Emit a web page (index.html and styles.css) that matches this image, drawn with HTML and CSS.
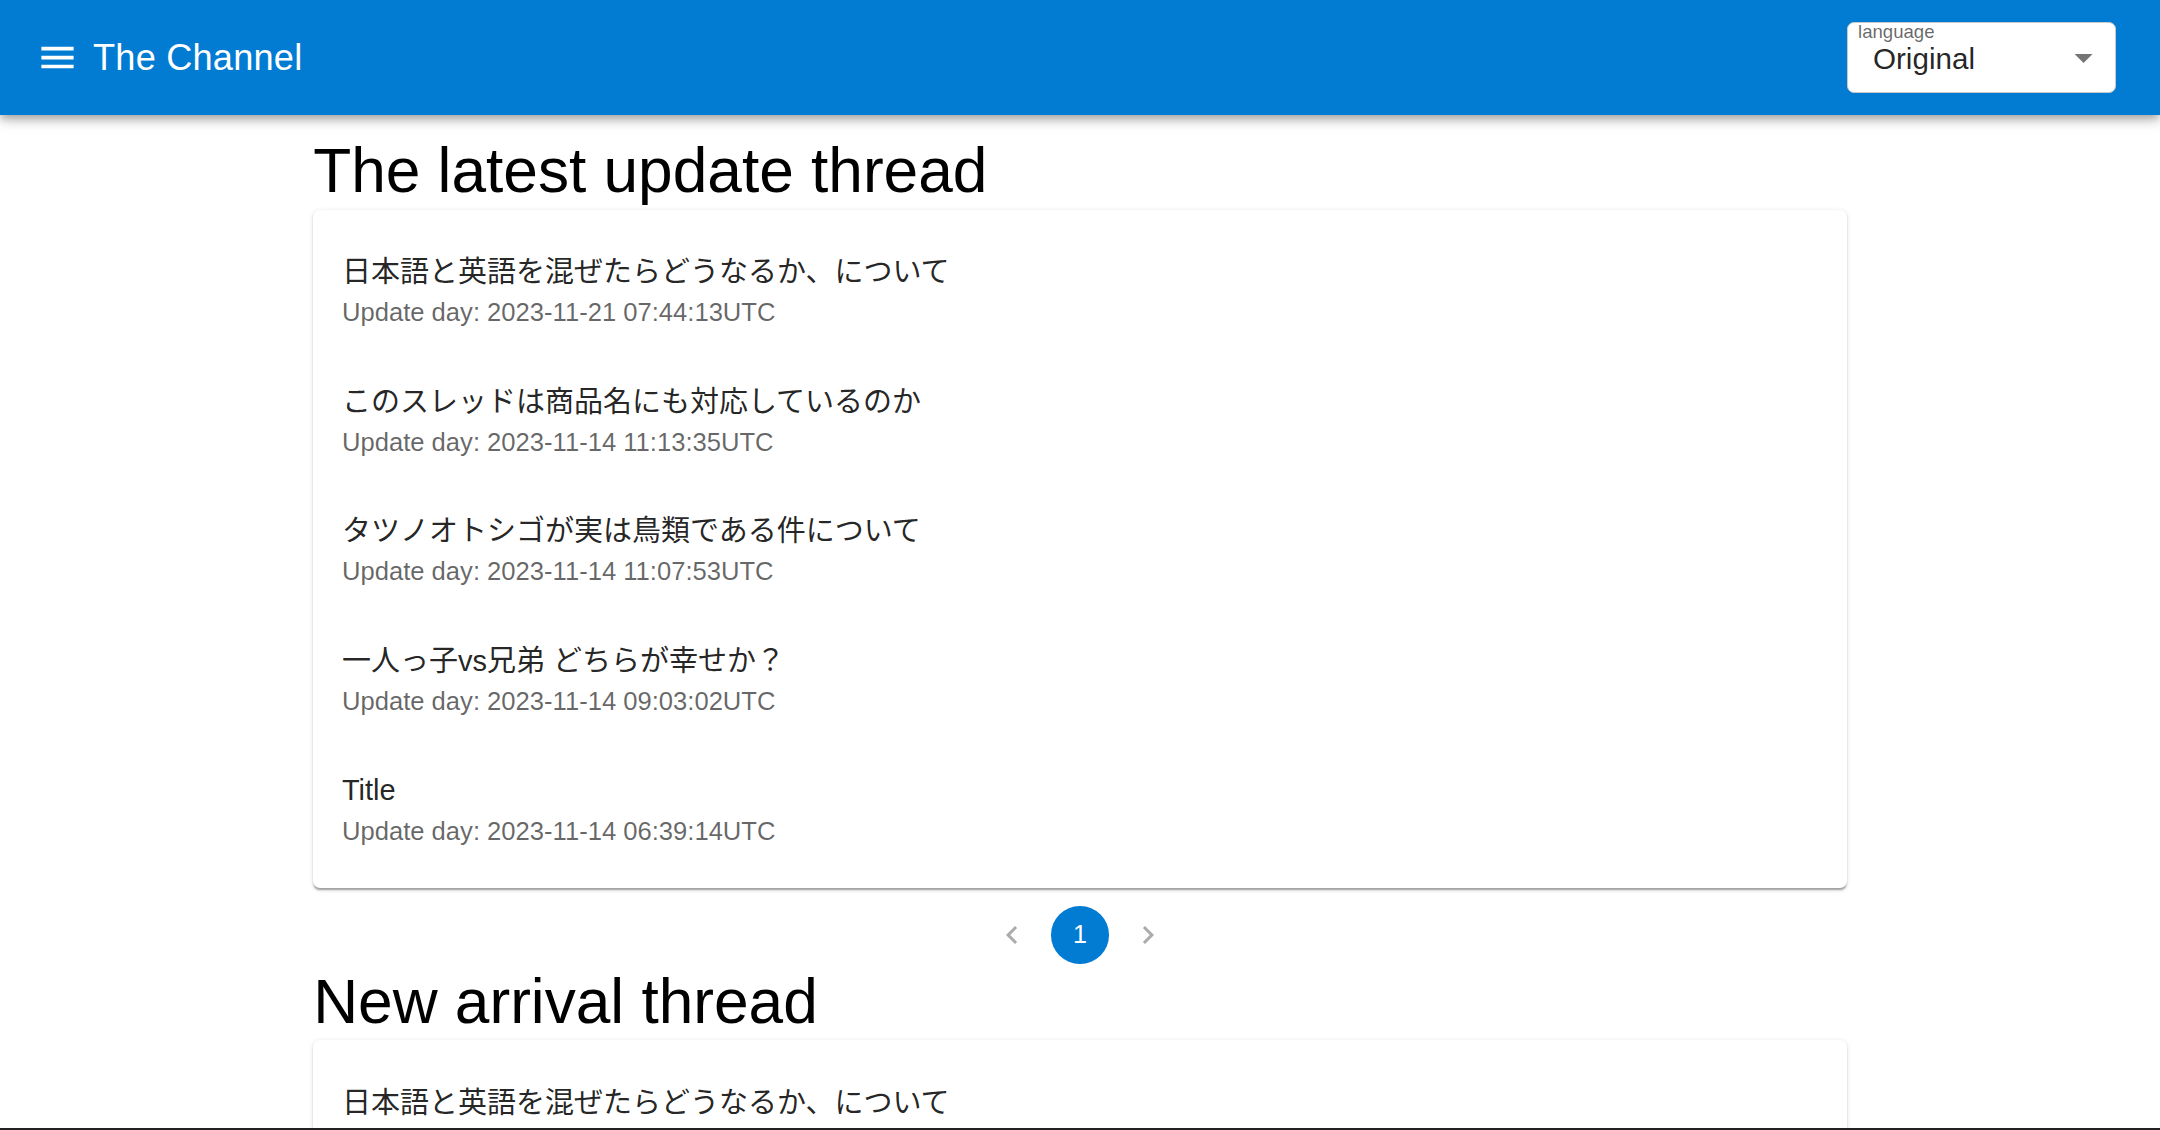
FILE: index.html
```html
<!DOCTYPE html>
<html lang="ja">
<head>
<meta charset="utf-8">
<title>The Channel</title>
<link rel="stylesheet" href="styles.css">
</head>
<body>
<div class="page">
  <header class="app-bar">
    <button class="menu-btn" aria-label="menu">
      <svg viewBox="0 0 24 24" class="menu-icon"><path d="M3 18h18v-2H3v2zm0-5h18v-2H3v2zm0-7v2h18V6H3z"/></svg>
    </button>
    <div class="app-title">The Channel</div>
    <div class="lang-select">
      <span class="lang-label">language</span>
      <span class="lang-value">Original</span>
      <svg viewBox="0 0 24 24" class="drop-icon"><path d="M7 10l5 5 5-5z"/></svg>
    </div>
  </header>

  <main class="container">
    <h2 class="section-title">The latest update thread</h2>
    <div class="card">
      <ul class="list">
        <li class="item">
          <div class="primary">日本語と英語を混ぜたらどうなるか、について</div>
          <div class="secondary">Update day: 2023-11-21 07:44:13UTC</div>
        </li>
        <li class="item">
          <div class="primary">このスレッドは商品名にも対応しているのか</div>
          <div class="secondary">Update day: 2023-11-14 11:13:35UTC</div>
        </li>
        <li class="item">
          <div class="primary">タツノオトシゴが実は鳥類である件について</div>
          <div class="secondary">Update day: 2023-11-14 11:07:53UTC</div>
        </li>
        <li class="item">
          <div class="primary">一人っ子vs兄弟 どちらが幸せか？</div>
          <div class="secondary">Update day: 2023-11-14 09:03:02UTC</div>
        </li>
        <li class="item">
          <div class="primary">Title</div>
          <div class="secondary">Update day: 2023-11-14 06:39:14UTC</div>
        </li>
      </ul>
    </div>

    <nav class="pagination">
      <span class="page-item arrow">
        <svg viewBox="0 0 24 24"><path d="M15.41 7.41 14 6l-6 6 6 6 1.41-1.41L10.83 12z"/></svg>
      </span>
      <span class="page-item current">1</span>
      <span class="page-item arrow">
        <svg viewBox="0 0 24 24"><path d="M10 6 8.59 7.41 13.17 12l-4.58 4.59L10 18l6-6z"/></svg>
      </span>
    </nav>

    <h2 class="section-title">New arrival thread</h2>
    <div class="card">
      <ul class="list">
        <li class="item">
          <div class="primary">日本語と英語を混ぜたらどうなるか、について</div>
          <div class="secondary">Update day: 2023-11-21 07:44:13UTC</div>
        </li>
      </ul>
    </div>
  </main>
  <div class="window-edge"></div>
</div>
</body>
</html>
```

FILE: styles.css
```css
html, body {
  margin: 0;
  padding: 0;
  background: #ffffff;
}

body {
  font-family: "Liberation Sans", Arial, "Noto Sans CJK JP", sans-serif;
  color: rgba(0, 0, 0, 0.87);
}

.page {
  position: relative;
  height: 100vh;
  overflow: hidden;
}

/* ---------- App bar ---------- */
.app-bar {
  position: relative;
  z-index: 2;
  height: 115px;
  box-sizing: border-box;
  display: flex;
  align-items: center;
  padding: 0 44px 0 36px;
  background: #027bd3;
  color: #ffffff;
  box-shadow: 0 3.6px 7.2px -1.8px rgba(0, 0, 0, 0.2),
              0 7.2px 9px 0 rgba(0, 0, 0, 0.14),
              0 1.8px 18px 0 rgba(0, 0, 0, 0.12);
}

.menu-btn {
  display: flex;
  align-items: center;
  justify-content: center;
  width: 43px;
  height: 43px;
  padding: 0;
  margin: 0;
  border: 0;
  background: transparent;
}

.menu-icon {
  width: 43.2px;
  height: 43.2px;
  fill: #ffffff;
}

.app-title {
  flex: 1;
  margin-left: 14px;
  font-size: 36.2px;
  line-height: 1.6;
  font-weight: 400;
  letter-spacing: 0.2px;
}

.lang-select {
  position: relative;
  width: 269px;
  height: 71px;
  box-sizing: border-box;
  display: flex;
  align-items: center;
  padding: 0 10px 0 25px;
  background: #ffffff;
  border: 1.5px solid #c9c9c9;
  border-radius: 7px;
  color: rgba(0, 0, 0, 0.87);
}

.lang-label {
  position: absolute;
  left: 10px;
  top: -2px;
  font-size: 18.6px;
  line-height: 22px;
  color: rgba(0, 0, 0, 0.6);
}

.lang-value {
  flex: 1;
  font-size: 29.6px;
  line-height: 41px;
  margin-top: 1px;
}

.drop-icon {
  width: 43.2px;
  height: 43.2px;
  fill: #757575;
}

/* ---------- Main ---------- */
.container {
  max-width: 1620px;
  box-sizing: border-box;
  margin: 0 auto;
  padding: 18px 43.2px 0;
}

.section-title {
  margin: 0 0 1px;
  font-size: 62.2px;
  line-height: 75.6px;
  height: 75.6px;
  font-weight: 400;
  color: #000000;
  white-space: nowrap;
}

.card {
  background: #ffffff;
  border-radius: 7.2px;
  box-shadow: 0 3.6px 1.8px -1.8px rgba(0, 0, 0, 0.2),
              0 1.8px 1.8px 0 rgba(0, 0, 0, 0.14),
              0 1.8px 5.4px 0 rgba(0, 0, 0, 0.12);
}

.list {
  list-style: none;
  margin: 0;
  padding: 16.4px 0 14.4px;
}

.item {
  padding: 14.4px 28.8px;
}

.primary {
  margin-top: 10.8px;
  height: 42.2px;
  font-size: 29px;
  line-height: 42.2px;
  color: rgba(0, 0, 0, 0.87);
  white-space: nowrap;
}

.secondary {
  margin-bottom: 10.8px;
  height: 37px;
  font-size: 25.6px;
  line-height: 38px;
  color: rgba(0, 0, 0, 0.6);
  white-space: nowrap;
}

/* ---------- Pagination ---------- */
.pagination {
  display: flex;
  justify-content: center;
  margin-top: 18px;
}

.page-item {
  width: 57.6px;
  height: 57.6px;
  margin: 0 5.4px;
  display: flex;
  align-items: center;
  justify-content: center;
  border-radius: 50%;
  font-size: 25.2px;
}

.page-item svg {
  width: 36px;
  height: 36px;
  fill: rgba(0, 0, 0, 0.33);
}

.page-item.current {
  background: #027bd3;
  color: #ffffff;
}

.window-edge {
  position: absolute;
  left: 0;
  right: 0;
  bottom: 0;
  height: 2px;
  background: #222222;
}
```
